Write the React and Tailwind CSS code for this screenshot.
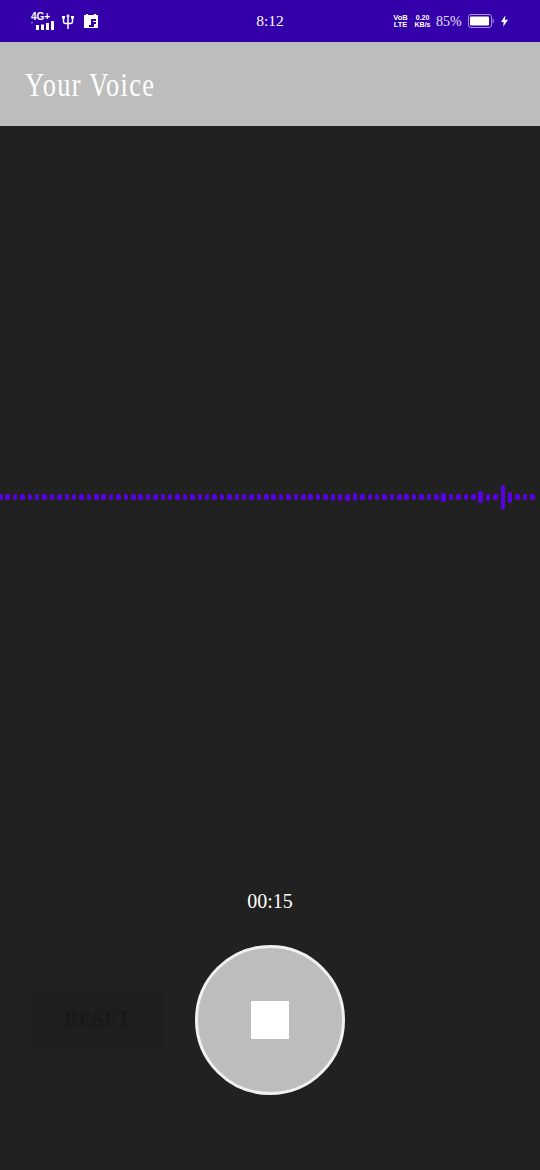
const tallBars = {
  45: 7, 46: 7, 47: 7, 48: 8,
  60: 9, 65: 12, 66: 7, 68: 25, 69: 11,
}

const bars = Array.from({ length: 73 }, (_, i) => tallBars[i] || 6)

const Signal = () => (
  <svg width="24" height="9" viewBox="0 0 24 9" fill="white">
    <rect x="0" y="1" width="2" height="1.5" opacity="0.4" />
    <rect x="5" y="4" width="3" height="5" />
    <rect x="10" y="3.5" width="3" height="5.5" />
    <rect x="15" y="2" width="3" height="7" />
    <rect x="20" y="0" width="3" height="9" />
  </svg>
)

const UsbIcon = () => (
  <svg width="12" height="15" viewBox="0 0 12 15" fill="none" stroke="white" strokeWidth="1.5">
    <path d="M6 2v13" />
    <path d="M1.5 4v3.5q0 2 2 2h5q2 0 2-2V4" />
    <path d="M6 0l2 2.5H4z" fill="white" stroke="none" />
    <rect x="0" y="2" width="3" height="2.5" fill="white" stroke="none" />
    <rect x="9" y="2" width="3" height="2.5" fill="white" stroke="none" />
  </svg>
)

const FlagIcon = () => (
  <svg width="14" height="14" viewBox="0 0 14 14">
    <path d="M0 1h2V0h2v1h6V0h2v1h2v13H0z" fill="white" />
    <path d="M7 5h5v2H9v1h3v2h-2v3H5v-2h2z" fill="#3300aa" />
  </svg>
)

const Battery = () => (
  <svg width="26" height="14" viewBox="0 0 26 14" fill="none">
    <rect x="0.5" y="0.5" width="23" height="13" rx="2.5" stroke="#a591e3" />
    <rect x="2" y="2.5" width="19" height="9" rx="1" fill="white" />
    <rect x="24.5" y="5" width="1.5" height="4" fill="#8266d8" />
  </svg>
)

const Bolt = () => (
  <svg width="7" height="12" viewBox="0 0 8 13" fill="white">
    <path d="M5 0L0 7.5h3L2.5 13 8 5H4.5z" />
  </svg>
)

const App = () => {
  return (
    <div className="w-[540px] h-[1170px] flex flex-col bg-[#212121] overflow-hidden font-['Liberation_Serif',serif]">
      {/* Status bar */}
      <div className="h-[42px] shrink-0 bg-[#3300aa] flex items-center text-white">
        <div className="w-[210px] flex items-center pl-[31px]">
          <div className="w-[24px] flex flex-col items-start">
            <span className="font-['Liberation_Sans',sans-serif] font-bold text-[10px] leading-[8px]">4G+</span>
            <Signal />
          </div>
          <div className="ml-[7px] flex"><UsbIcon /></div>
          <div className="ml-[10px] flex"><FlagIcon /></div>
        </div>
        <div className="w-[120px] text-center text-[15.5px]">8:12</div>
        <div className="flex-1 flex items-center pl-[63px]">
          <div className="w-[15px] flex flex-col items-center font-['Liberation_Sans',sans-serif] font-bold text-[7.5px] leading-[7px]">
            <span>VoB</span>
            <span>LTE</span>
          </div>
          <div className="ml-[6px] w-[17px] flex flex-col items-center font-['Liberation_Sans',sans-serif] font-bold text-[7px] leading-[7px]">
            <span>0.20</span>
            <span>KB/s</span>
          </div>
          <span className="ml-[5px] text-[14px] text-[#e8e0f8]">85%</span>
          <div className="ml-[6px] flex"><Battery /></div>
          <div className="ml-[7px] flex"><Bolt /></div>
        </div>
      </div>

      {/* App bar */}
      <div className="h-[84px] shrink-0 bg-[#bdbdbd] flex items-center pl-[25px] pt-[3px]">
        <h1 className="text-[33px] leading-none tracking-[1.6px] text-white origin-left scale-x-[0.8]">Your Voice</h1>
      </div>

      {/* Body */}
      <div className="flex-1 flex flex-col">
        <div className="mt-[346px] h-[50px] flex items-center justify-between w-[537px] ml-[-2px]">
          {bars.map((h, i) => (
            <div
              key={i}
              className="w-[4.5px] rounded-[2px] bg-[#5a00e6]"
              style={{ height: h }}
            />
          ))}
        </div>

        <div className="mt-[366px] text-center text-[20px] leading-[26px] text-white">00:15</div>

        <div className="mt-[31px] flex items-center pl-[32px]">
          <button className="w-[131px] h-[54px] rounded bg-[#1e1e1e] text-[#161616] text-[21px] tracking-[0.5px]">
            RESET
          </button>
          <button className="ml-[32px] w-[150px] h-[150px] rounded-full bg-[#bdbdbd] border-[3px] border-[#f0f0f0] flex items-center justify-center">
            <span className="w-[38px] h-[38px] bg-white" />
          </button>
        </div>
      </div>
    </div>
  )
}

export default App
